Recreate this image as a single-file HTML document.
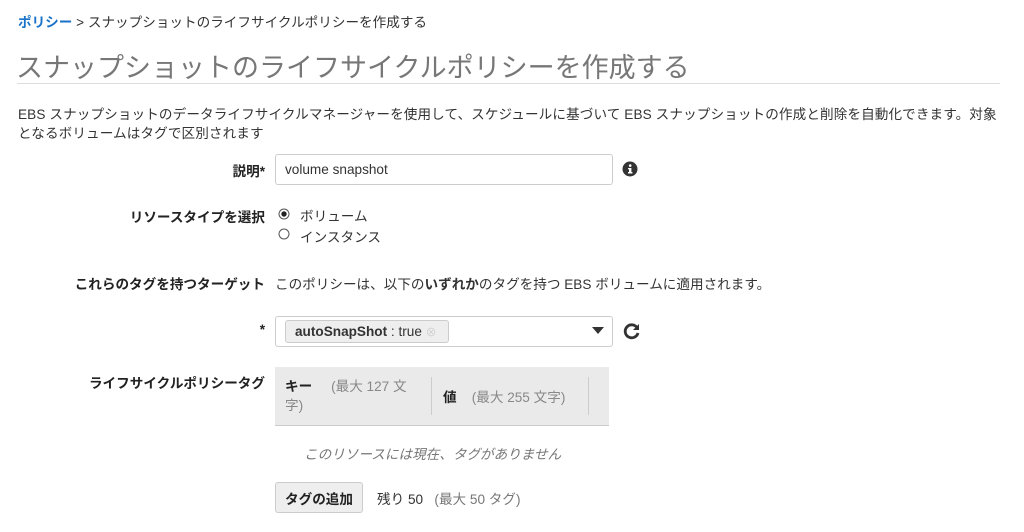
<!DOCTYPE html>
<html><head><meta charset="utf-8"><style>
*{margin:0;padding:0;box-sizing:border-box}
body{width:1024px;height:532px;background:#fff;font-family:"Liberation Sans","Noto Sans CJK JP",sans-serif;font-size:13.6px;color:#333;position:relative;overflow:hidden}
.a{position:absolute;white-space:nowrap}
.lbl{position:absolute;right:759px;font-weight:bold;color:#222;white-space:nowrap}
</style></head><body>
<div class="a" style="left:18px;top:11px"><span style="color:#1a73c8;font-weight:bold">ポリシー</span> &gt; スナップショットのライフサイクルポリシーを作成する</div>
<div class="a" style="left:16px;top:46px;font-size:27px;color:#777">スナップショットのライフサイクルポリシーを作成する</div>
<div class="a" style="left:17px;top:83px;width:983px;height:1px;background:#ddd"></div>
<div class="a" style="left:18px;top:105px;width:990px;white-space:normal;line-height:19px;letter-spacing:0.1px">EBS スナップショットのデータライフサイクルマネージャーを使用して、スケジュールに基づいて EBS スナップショットの作成と削除を自動化できます。対象<br>となるボリュームはタグで区別されます</div>

<div class="lbl" style="top:160px">説明*</div>
<div class="a" style="left:275px;top:154px;width:338px;height:31px;border:1px solid #ccc;border-radius:3px;padding:7px 9px;color:#333">volume snapshot</div>
<svg class="a" style="left:622px;top:161px" width="16" height="16" viewBox="0 0 16 16"><circle cx="8" cy="8" r="7.5" fill="#333"/><rect x="7" y="7" width="2.4" height="5" fill="#fff"/><rect x="6" y="11" width="4.4" height="1.5" fill="#fff"/><rect x="6" y="7" width="2" height="1.3" fill="#fff"/><circle cx="8.2" cy="4.6" r="1.3" fill="#fff"/></svg>

<div class="lbl" style="top:206px">リソースタイプを選択</div>
<svg class="a" style="left:278px;top:208px" width="12" height="12"><circle cx="6" cy="6" r="5" fill="#fff" stroke="#555"/><circle cx="6" cy="6" r="2.7" fill="#222"/></svg>
<div class="a" style="left:300px;top:205px">ボリューム</div>
<svg class="a" style="left:278px;top:228px" width="12" height="12"><circle cx="6" cy="6" r="5" fill="#fff" stroke="#555"/></svg>
<div class="a" style="left:300px;top:226px">インスタンス</div>

<div class="lbl" style="top:273px">これらのタグを持つターゲット</div>
<div class="a" style="left:275px;top:273px">このポリシーは、以下の<b>いずれか</b>のタグを持つ EBS ボリュームに適用されます。</div>

<div class="lbl" style="top:322px">*</div>
<div class="a" style="left:275px;top:316px;width:338px;height:31px;border:1px solid #ccc;border-radius:3px"></div>
<div class="a" style="left:285px;top:320px;width:164px;height:23px;background:#eee;border:1px solid #ccc;border-radius:3px;padding:3px 9px"><b>autoSnapShot</b> : true <span style="color:#ccc;font-size:11px">⊗</span></div>
<svg class="a" style="left:592px;top:327px" width="12" height="7"><path d="M0 0H12L6 7Z" fill="#333"/></svg>
<svg class="a" style="left:623px;top:322px" width="18" height="18" viewBox="0 0 18 18"><path d="M14 5.5A6.5 6.5 0 1 0 15 11" fill="none" stroke="#333" stroke-width="2.8"/><path d="M16 2V8H10Z" fill="#333"/></svg>

<div class="lbl" style="top:372px">ライフサイクルポリシータグ</div>
<div class="a" style="left:275px;top:367px;width:334px;height:59px;background:#eaeaea;border-bottom:1px solid #ccc"></div>
<div class="a" style="left:285px;top:377px;width:135px;white-space:normal;line-height:19px;color:#888"><b style="color:#222">キー</b>&nbsp;&nbsp;&nbsp;&nbsp;&nbsp;(最大 127 文字)</div>
<div class="a" style="left:431px;top:377px;width:1px;height:38px;background:#ccc"></div>
<div class="a" style="left:443px;top:386px;color:#888"><b style="color:#222">値</b>&nbsp;&nbsp;&nbsp;&nbsp;(最大 255 文字)</div>
<div class="a" style="left:588px;top:377px;width:1px;height:38px;background:#ccc"></div>

<div class="a" style="left:304px;top:443px;color:#777;font-style:italic">このリソースには現在、タグがありません</div>

<div class="a" style="left:275px;top:482px;width:88px;height:31px;background:#eee;border:1px solid #ccc;border-radius:3px;font-weight:bold;color:#222;padding:5px 0;text-align:center">タグの追加</div>
<div class="a" style="left:377px;top:488px">残り 50&nbsp;&nbsp;&nbsp;<span style="color:#777">(最大 50 タグ)</span></div>
</body></html>
